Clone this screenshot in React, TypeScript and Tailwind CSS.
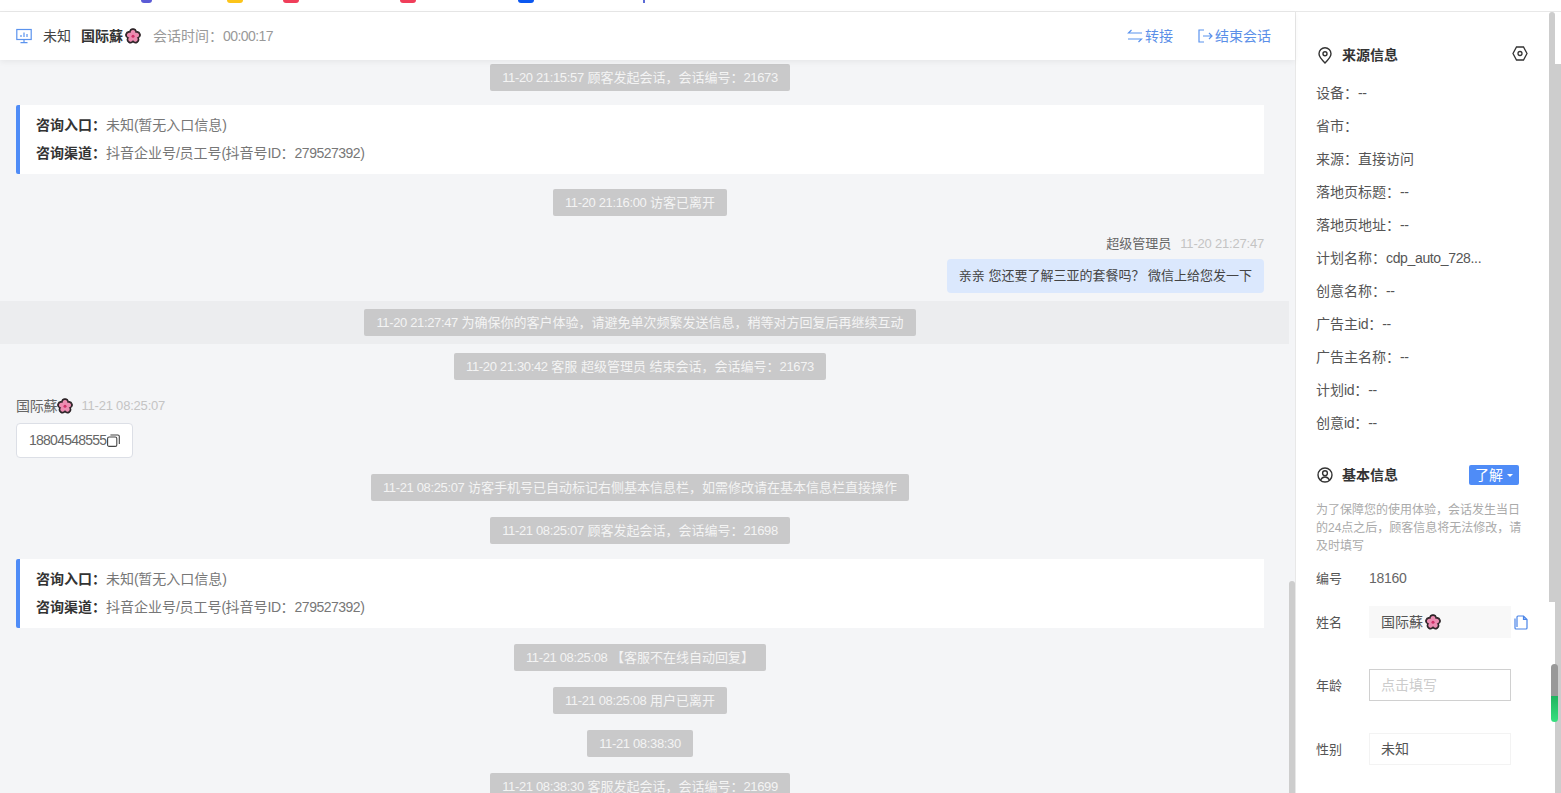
const font = "font-['Liberation_Sans','Noto_Sans_CJK_SC',sans-serif]";
const C = "\uff1a";
const K = "\uff0c";
const Q = "\uff1f";

function L({ text, t = "tracking-[-0.35px]" }: { text: string; t?: string }) {
  const parts = text.split(/([\x21-\x7e]+(?: [\x21-\x7e]+)*)/);
  return (
    <>
      {parts.map((p, i) => (i % 2 === 1 ? <span key={i} className={t}>{p}</span> : <span key={i}>{p}</span>))}
    </>
  );
}

function Flower({ className = "" }: { className?: string }) {
  const petals = [0, 72, 144, 216, 288];
  return (
    <svg width={16} height={16} viewBox="0 0 16 16" className={`shrink-0 ${className}`}>
      {petals.map((a) => (
        <ellipse key={a} cx="8" cy="4.3" rx="3.2" ry="3.5" transform={`rotate(${a} 8 8.2)`} fill="#3a2a30" stroke="#2b2226" strokeWidth="1.2" />
      ))}
      {petals.map((a) => (
        <ellipse key={a} cx="8" cy="4.8" rx="2.4" ry="2.8" transform={`rotate(${a} 8 8.2)`} fill="#ec8cb2" />
      ))}
      <circle cx="8" cy="8.2" r="1.5" fill="#d02f68" />
    </svg>
  );
}

function Pill({ text }: { text: string }) {
  return (
    <div className="flex justify-center">
      <div className="h-[27px] px-3 flex items-center bg-[#c9c9ca] rounded-[2px] text-[13px] text-[#f4f4f4] whitespace-nowrap">
        <span><L text={text} /></span>
      </div>
    </div>
  );
}

function InfoCard() {
  return (
    <div className="h-[69px] bg-white border-l-4 border-[#4f8cf7] rounded-l-[2px] pl-4 flex flex-col justify-center gap-[9px] text-[14px] leading-[19px]">
      <div><span className="font-bold text-[#333]">{`咨询入口${C}`}</span><span className="text-[#777]"><L text="未知(暂无入口信息)" t="tracking-[-0.5px]" /></span></div>
      <div><span className="font-bold text-[#333]">{`咨询渠道${C}`}</span><span className="text-[#777]"><L text={`抖音企业号/员工号(抖音号ID${C}279527392)`} t="tracking-[-0.5px]" /></span></div>
    </div>
  );
}

function Field({ label, value }: { label: string; value: string }) {
  return (
    <div className="h-[33px] flex items-center text-[14px] text-[#555] whitespace-nowrap">
      <span><L text={`${label}${C}`} /></span>
      <span><L text={value} /></span>
    </div>
  );
}

function FormRow({ label, children, className }: { label: string; children: React.ReactNode; className: string }) {
  return (
    <div className={`flex items-center text-[14px] ${className}`}>
      <span className="w-[53px] pt-[2px] text-[13px] text-[#555]">{label}</span>
      {children}
    </div>
  );
}

const tips = [
  "ml-[141px] w-[11px] bg-[#5b5bd6] rounded-b-[6px]",
  "ml-[75px] w-[16px] bg-[#fcc419] rounded-b-[4px]",
  "ml-[40px] w-[16px] bg-[#f03e5a] rounded-b-[4px]",
  "ml-[101px] w-[16px] bg-[#f03e5a] rounded-b-[6px]",
  "ml-[102px] w-[16px] bg-[#0b57f0] rounded-b-[4px]",
  "ml-[109px] w-[2px] bg-[#5b6bd6]",
];

export default function App() {
  return (
    <div className={`relative w-[1561px] h-[793px] overflow-hidden bg-white flex flex-col ${font}`}>
      <div className="h-[12px] shrink-0 border-b border-[#e8e8e8] flex items-start">
        {tips.map((t) => (
          <div key={t} className={`h-[3px] ${t}`} />
        ))}
      </div>
      <div className="flex-1 min-h-0 flex">
        <div className="w-[1295px] shrink-0 flex flex-col">
          <div className="relative z-10 h-[48px] shrink-0 bg-white shadow-[0_2px_6px_rgba(0,0,0,0.06)] pl-4 pr-6 flex items-center text-[14px]">
            <svg width="16" height="16" viewBox="0 0 16 16" fill="none" stroke="#5b93ee" strokeWidth="1.2">
              <rect x="0.8" y="1.5" width="14.4" height="10" />
              <path d="M8 11.5v3M4.5 14.6h7" />
              <path d="M5 9V7M8 9V4.5M11 9V6" />
            </svg>
            <span className="ml-[11px] text-[#444]">未知</span>
            <span className="ml-[10px] font-bold text-[#333]">国际蘇</span>
            <Flower className="ml-[2px]" />
            <span className="ml-3 text-[#999]"><L text={`会话时间${C}00:00:17`} t="tracking-[-0.55px]" /></span>
            <div className="ml-auto flex items-center text-[#5b8fe8]">
              <svg width="16" height="14" viewBox="0 0 16 14" fill="none" stroke="#5b93ee" strokeWidth="1.2">
                <path d="M15 4H1.5L4.5 1M1 10h13.5L11.5 13" />
              </svg>
              <span className="ml-[2px]">转接</span>
              <svg className="ml-[25px]" width="15" height="14" viewBox="0 0 15 14" fill="none" stroke="#5b93ee" strokeWidth="1.2">
                <path d="M6 1H1v12h5M5 7h9M11 4l3 3-3 3" />
              </svg>
              <span className="ml-[2px]">结束会话</span>
            </div>
          </div>
          <div className="flex-1 min-h-0 flex bg-[#f4f5f7] overflow-hidden">
            <div className="w-[1289px] shrink-0 pl-4 pr-[25px] pt-1">
              <Pill text={`11-20 21:15:57 顾客发起会话${K}会话编号${C}21673`} />
              <div className="mt-[14px]"><InfoCard /></div>
              <div className="mt-[15px]"><Pill text="11-20 21:16:00 访客已离开" /></div>
              <div className="mt-[19px] h-[17px] flex justify-end items-center text-[13px] text-[#666]">
                超级管理员<span className="ml-[9px] text-[#c4c4c4] tracking-[-0.2px]">11-20 21:27:47</span>
              </div>
              <div className="mt-[7px] flex justify-end">
                <div className="h-[34px] px-3 bg-[#dbe8fd] rounded-[4px] flex items-center text-[13px] text-[#444]">{`亲亲 您还要了解三亚的套餐吗${Q} 微信上给您发一下`}</div>
              </div>
              <div className="mt-2 -ml-4 -mr-[25px] h-[43px] bg-[#ecedef] pr-[9px] flex items-center justify-center">
                <Pill text={`11-20 21:27:47 为确保你的客户体验${K}请避免单次频繁发送信息${K}稍等对方回复后再继续互动`} />
              </div>
              <div className="mt-[9px]"><Pill text={`11-20 21:30:42 客服 超级管理员 结束会话${K}会话编号${C}21673`} /></div>
              <div className="mt-[17px] h-[18px] flex items-center text-[13px] text-[#666]">
                <span className="text-[14px] tracking-[-0.2px]">国际蘇</span><Flower /><span className="ml-[8px] text-[#c4c4c4] tracking-[-0.2px]">11-21 08:25:07</span>
              </div>
              <div className="mt-[8px] w-[117px] h-[35px] bg-white border border-[#dcdfe6] rounded-[4px] flex items-center pl-3 text-[14px] text-[#666]">
                <span className="tracking-[-0.75px]">18804548555</span>
                <svg className="ml-[1px]" width="13" height="13" viewBox="0 0 13 13" fill="none" stroke="#444" strokeWidth="1.1">
                  <rect x="0.6" y="3" width="9.2" height="9.4" rx="1.5" />
                  <path d="M3.4 1h7.4a1.5 1.5 0 0 1 1.5 1.5V10" />
                </svg>
              </div>
              <div className="mt-4"><Pill text={`11-21 08:25:07 访客手机号已自动标记右侧基本信息栏${K}如需修改请在基本信息栏直接操作`} /></div>
              <div className="mt-4"><Pill text={`11-21 08:25:07 顾客发起会话${K}会话编号${C}21698`} /></div>
              <div className="mt-[15px]"><InfoCard /></div>
              <div className="mt-4"><Pill text="11-21 08:25:08 【客服不在线自动回复】" /></div>
              <div className="mt-4"><Pill text="11-21 08:25:08 用户已离开" /></div>
              <div className="mt-4"><Pill text="11-21 08:38:30" /></div>
              <div className="mt-4"><Pill text={`11-21 08:38:30 客服发起会话${K}会话编号${C}21699`} /></div>
            </div>
            <div className="w-[6px] shrink-0 pt-[521px]">
              <div className="h-full bg-[#cdcdcd] rounded-t-[3px]" />
            </div>
          </div>
        </div>
        <div className="flex-1 min-w-0 border-l border-[#e8e8e8] pl-5 pt-[31px] pr-[21px]">
          <div className="h-6 flex items-center">
            <svg className="ml-[2px]" width="14" height="17" viewBox="0 0 14 17" fill="none" stroke="#333" strokeWidth="1.4">
              <path d="M7 16C3.5 12.5 1 10 1 6.8a6 6 0 0 1 12 0C13 10 10.5 12.5 7 16Z" />
              <circle cx="7" cy="6.8" r="2" />
            </svg>
            <span className="ml-[10px] text-[14px] font-bold text-[#333]">来源信息</span>
            <svg className="ml-auto -mt-1" width="16" height="15" viewBox="0 0 16 15" fill="none" stroke="#333" strokeWidth="1.3">
              <path d="M4.5 1h7L15 7.5 11.5 14h-7L1 7.5Z" />
              <circle cx="8" cy="7.5" r="2" />
            </svg>
          </div>
          <div className="mt-[10px]">
            <Field label="设备" value="--" />
            <Field label="省市" value="" />
            <Field label="来源" value="直接访问" />
            <Field label="落地页标题" value="--" />
            <Field label="落地页地址" value="--" />
            <Field label="计划名称" value="cdp_auto_728..." />
            <Field label="创意名称" value="--" />
            <Field label="广告主id" value="--" />
            <Field label="广告主名称" value="--" />
            <Field label="计划id" value="--" />
            <Field label="创意id" value="--" />
          </div>
          <div className="mt-[25px] h-5 flex items-center">
            <svg className="ml-[1px]" width="16" height="16" viewBox="0 0 16 16" fill="none" stroke="#333" strokeWidth="1.4">
              <circle cx="8" cy="8" r="7" />
              <circle cx="8" cy="6.2" r="2.4" />
              <path d="M3.6 13c1-2 2.6-3 4.4-3s3.4 1 4.4 3" />
            </svg>
            <span className="ml-[9px] text-[14px] font-bold text-[#333]">基本信息</span>
            <div className="ml-auto mr-[9px] w-[50px] h-5 bg-[#4f8cf7] rounded-[2px] flex items-center justify-center gap-1 text-[14px] text-white">
              了解<span className="w-0 h-0 border-x-[3px] border-x-transparent border-t-[3px] border-t-white" />
            </div>
          </div>
          <p className="mt-4 text-[12px] leading-[18px] text-[#aaa] w-[210px]">{`为了保障您的使用体验${K}会话发生当日的24点之后${K}顾客信息将无法修改${K}请及时填写`}</p>
          <FormRow label="编号" className="mt-[14px] h-[18px]">
            <span className="text-[#666] tracking-[-0.3px]">18160</span>
          </FormRow>
          <FormRow label="姓名" className="mt-[19px]">
            <div className="w-[142px] h-8 bg-[#f8f8f8] pl-3 flex items-center text-[#555]">国际蘇<Flower className="ml-[2px]" /></div>
            <svg className="ml-[3px]" width="14" height="15" viewBox="0 0 14 15" fill="none" stroke="#4a84e8" strokeWidth="1.2">
              <path d="M1 3.5V13a1 1 0 0 0 1 1h10a1 1 0 0 0 1-1V4.5L9.5 1H4a1 1 0 0 0-1 1v10" />
              <path d="M9.5 1v3.5H13" fill="#4a84e8" fillOpacity="0.5" />
            </svg>
          </FormRow>
          <FormRow label="年龄" className="mt-[31px]">
            <div className="w-[142px] h-8 border border-[#d0d0d0] pl-[11px] flex items-center text-[#ccc]">点击填写</div>
          </FormRow>
          <FormRow label="性别" className="mt-8">
            <div className="w-[142px] h-8 border border-[#f3f3f3] pl-[11px] flex items-center text-[#555]">未知</div>
          </FormRow>
        </div>
        <div className="w-[6px] shrink-0">
          <div className="h-[590px] bg-[#cdcdcd] rounded-t-[3px]" />
        </div>
        <div className="w-[6px] shrink-0 pt-[52px]">
          <div className="h-full bg-[#cdcdcd]" />
        </div>
      </div>
      <div className="absolute left-[1551px] top-[664px] w-[7px] h-[58px] rounded-full overflow-hidden flex flex-col">
        <div className="h-[32px] bg-[#999]" />
        <div className="flex-1 bg-gradient-to-b from-[#1fb45f] to-[#37e07f]" />
      </div>
    </div>
  );
}
